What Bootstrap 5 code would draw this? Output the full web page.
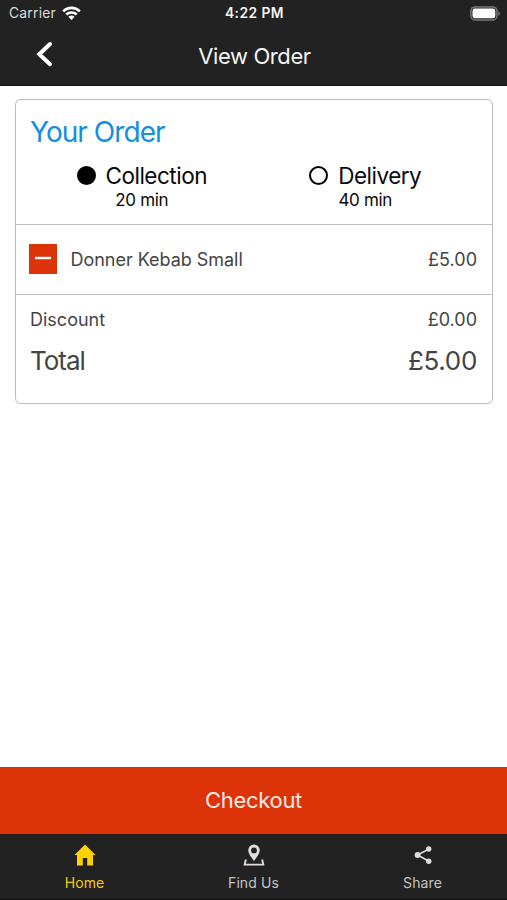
<!DOCTYPE html>
<html lang="en">
<head>
<meta charset="utf-8">
<meta name="viewport" content="width=device-width, initial-scale=1">
<title>View Order</title>
<link href="https://cdn.jsdelivr.net/npm/bootstrap@5.3.0/dist/css/bootstrap.min.css" rel="stylesheet">
<style>
  body { font-family: Inter, "Liberation Sans", sans-serif; height: 900px; color: #000; }
  svg { display: block; flex: none; }
  .bar-dark { background: #222; color: #f4f4f4; }
  .status { height: 27px; font-size: 13.8px; line-height: 27px; padding: 0 7px 0 9px; }
  .status .carrier { letter-spacing: .25px; color: #ddd; margin-right: 2px; }
  .status .fw-semibold { font-size: 13.8px; letter-spacing: .45px; }
  .title-row { height: 59px; padding-bottom: 1px; border-bottom: 1px solid #111; }
  .title-text { font-size: 22px; line-height: 58px; letter-spacing: -.4px; padding-left: 2px; }
  .side { width: 90px; }
  .back { margin: -4px 0 0 -2px; }
  .order-card { margin: 13px 14px 0 15px; border: 1px solid #bebebe; border-radius: 6px; box-shadow: 0 0 1px #ccc; }
  .part { padding: 0 15px 0 14px; color: #444; }
  .part + .part { border-top: 1px solid #bebebe; }
  .part-head { height: 124px; padding-top: 15px; }
  .heading { color: #128fe0; font-size: 28px; line-height: 34px; letter-spacing: -.95px; }
  .choice { color: #0a0a0a; font-size: 22.5px; line-height: 30px; letter-spacing: -.5px; margin-top: 12px; }
  .choice-row { gap: 10px; }
  .choice small { display: block; font-size: 17px; line-height: 18px; letter-spacing: -.3px; }
  .dot { width: 19px; height: 19px; margin-top: -2px; border: 2px solid #000; border-radius: 50%; }
  .dot.on { background: #000; }
  .line-item { height: 70px; padding-bottom: 1px; font-size: 18px; }
  .minus { width: 28px; height: 30px; margin-left: -1px; background: #dd3308; border: 0; padding: 0; }
  .item-name { margin-left: 13.500px; letter-spacing: -.03px; }
  .sums { height: 109px; padding-top: 9px; font-size: 18px; line-height: 32px; }
  .total { font-size: 26px; line-height: 50px; letter-spacing: -.3px; }
  .total-label { letter-spacing: -1px; }
  .checkout { height: 67px; background: #dd3308; color: #fbe9e2; border: 0; border-radius: 0; font-size: 22px; letter-spacing: -.3px; padding: 0; }
  .tabs { height: 66px; border-top: 1px solid #2c1a16; border-bottom: 1px solid #111; color: #c4c4c4; }
  .tab { padding-top: 8px; font-size: 14px; line-height: 18px; letter-spacing: .1px; }
  .tab svg { margin-bottom: 7px; }
  .tab.current { color: #f5c913; }
</style>
<script src="https://cdn.jsdelivr.net/npm/bootstrap@5.3.0/dist/js/bootstrap.bundle.min.js"></script>
</head>
<body class="d-flex flex-column bg-white m-0">
  <header class="bar-dark">
    <div class="status row g-0">
      <div class="col d-flex align-items-center gap-1"><span class="carrier">Carrier</span>
        <svg width="19" height="15" viewBox="0 0 20 15" fill="none" stroke="#fff" stroke-width="2.7"><path d="M1.200 5.200a12.500 12.500 0 0 1 17.600 0M4.500 8.600a7.900 7.900 0 0 1 11 0"/><path d="M6.700 11a4.700 4.700 0 0 1 6.600 0L10 14.400z" fill="#fff" stroke="none"/></svg>
      </div>
      <div class="col-auto fw-semibold">4:22 PM</div>
      <div class="col d-flex align-items-center justify-content-end">
        <svg width="30" height="15" viewBox="0 0 30 15"><rect x=".9" y=".9" width="26" height="13" rx="4" fill="none" stroke="#777" stroke-width="1.5"/><rect x="2.5" y="2.5" width="22.8" height="9.8" rx="2.4" fill="#fff"/><path d="M28.300 5v5q1.600-1 1.600-2.500T28.300 5z" fill="#777"/></svg>
      </div>
    </div>
    <div class="title-row d-flex align-items-center">
      <div class="side d-flex justify-content-center"><svg class="back" width="18" height="28" viewBox="0 0 18 28" fill="none" stroke="#fff" stroke-width="4" stroke-linecap="round"><path d="M15 4 4.300 14.200l10.700 10"/></svg></div>
      <div class="title-text flex-fill text-center"><span>View Order</span></div>
      <div class="side"></div>
    </div>
  </header>
  <main class="flex-fill">
    <section class="order-card">
      <div class="part part-head">
        <div class="heading"><span>Your Order</span></div>
        <div class="row g-0">
          <div class="col choice text-center"><div class="choice-row d-flex justify-content-center align-items-center"><i class="dot on"></i><span>Collection</span></div><small>20 min</small></div>
          <div class="col choice text-center"><div class="choice-row d-flex justify-content-center align-items-center"><i class="dot"></i><span>Delivery</span></div><small>40 min</small></div>
        </div>
      </div>
      <div class="part line-item d-flex align-items-center">
        <button class="minus" aria-label="Remove"><svg width="28" height="30"><path d="M6 14h16" stroke="#fff" stroke-width="2.400"/></svg></button>
        <span class="item-name">Donner Kebab Small</span><span class="ms-auto">£5.00</span>
      </div>
      <div class="part sums">
        <div class="d-flex justify-content-between"><span>Discount</span><span>£0.00</span></div>
        <div class="total d-flex justify-content-between"><span class="total-label">Total</span><span>£5.00</span></div>
      </div>
    </section>
  </main>
  <button class="checkout btn w-100"><span>Checkout</span></button>
  <nav class="tabs bar-dark row g-0">
    <div class="tab current col d-flex flex-column align-items-center"><svg width="24" height="24" viewBox="0 0 24 24" fill="#ffd200"><path d="M12 1.500 1.500 12H4v10.500h5.800V15h4.400v7.500H20V12h2.500z"/></svg><span>Home</span></div>
    <div class="tab col d-flex flex-column align-items-center"><svg width="24" height="24" viewBox="0 0 24 24" fill="#ddd"><path fill-rule="evenodd" d="M12 1.500a5.800 5.800 0 0 0-5.800 5.800C6.200 11.300 12 18 12 18s5.800-6.700 5.800-10.700A5.800 5.800 0 0 0 12 1.500zm0 3a2.900 2.900 0 1 1 0 5.800 2.900 2.900 0 0 1 0-5.800z"/><path d="M3.900 16.500 2.700 21.600h18.600l-1.200-5.100" fill="none" stroke="#ddd" stroke-width="1.900"/></svg><span>Find Us</span></div>
    <div class="tab col d-flex flex-column align-items-center"><svg width="24" height="24" viewBox="0 0 24 24" fill="#ddd"><path d="M18 6 6.500 12 18 18.200" fill="none" stroke="#ddd" stroke-width="1.600"/><circle cx="17.700" cy="6" r="2.700"/><circle cx="6.600" cy="12" r="2.900"/><circle cx="17.700" cy="18.300" r="2.700"/></svg><span>Share</span></div>
  </nav>
</body>
</html>
